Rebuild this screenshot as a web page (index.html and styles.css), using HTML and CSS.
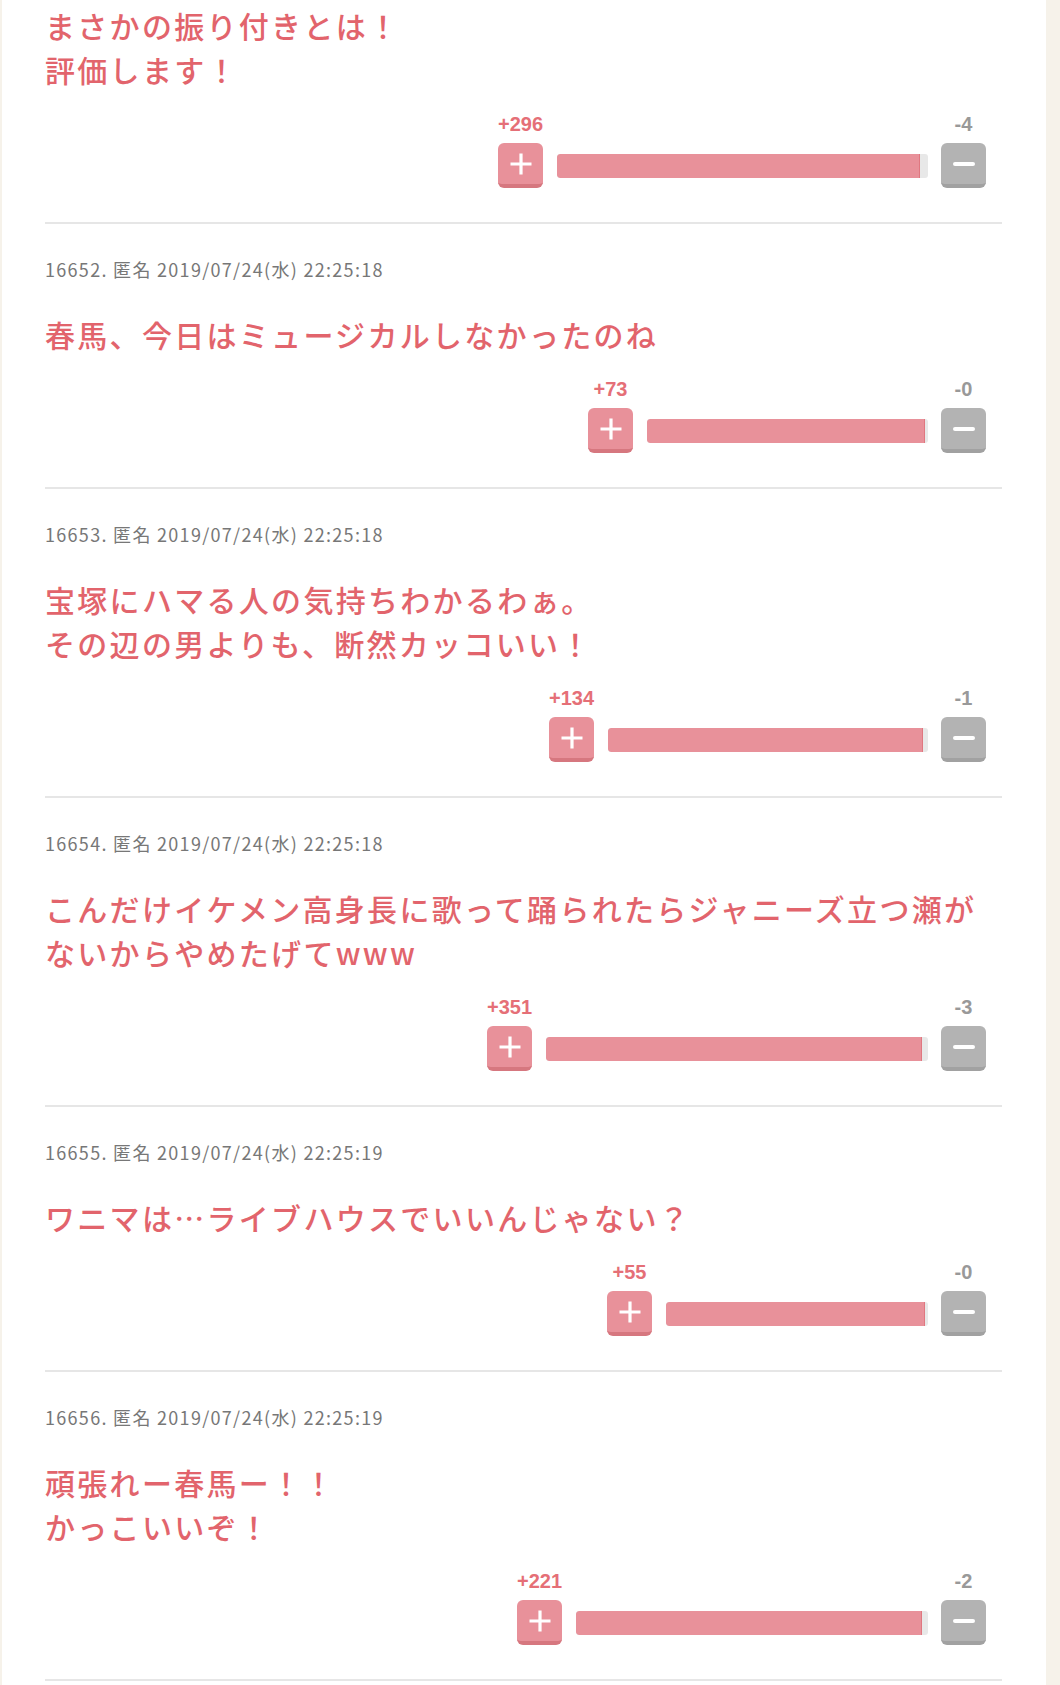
FILE: index.html
```html
<!DOCTYPE html>
<html lang="ja">
<head>
<meta charset="utf-8">
<title>コメント</title>
<link rel="stylesheet" href="styles.css">
</head>
<body>
<main class="thread">

  <article class="comment comment--cut">
    <p class="comment-body">まさかの振り付きとは！<br>評価します！</p>
    <div class="vote">
      <div class="vote-box">
        <span class="vote-count vote-count--plus">+296</span>
        <span class="vote-count vote-count--minus">-4</span>
        <button class="vote-btn vote-btn--plus" type="button" aria-label="プラス"><svg width="22" height="22" viewBox="0 0 22 22"><path d="M11 0.5v21M0.5 11h21" stroke="#fff" stroke-width="3.2" fill="none"/></svg></button>
        <div class="vote-bar" style="width:371px"><div class="vote-fill" style="width:98.7%"></div></div>
        <button class="vote-btn vote-btn--minus" type="button" aria-label="マイナス"><svg width="22" height="6" viewBox="0 0 22 6"><path d="M2 3h18" stroke="#fff" stroke-width="4" stroke-linecap="round" fill="none"/></svg></button>
      </div>
    </div>
  </article>

  <article class="comment">
    <p class="comment-meta">16652. 匿名 2019/07/24(水) 22:25:18</p>
    <p class="comment-body">春馬、今日はミュージカルしなかったのね</p>
    <div class="vote">
      <div class="vote-box">
        <span class="vote-count vote-count--plus">+73</span>
        <span class="vote-count vote-count--minus">-0</span>
        <button class="vote-btn vote-btn--plus" type="button" aria-label="プラス"><svg width="22" height="22" viewBox="0 0 22 22"><path d="M11 0.5v21M0.5 11h21" stroke="#fff" stroke-width="3.2" fill="none"/></svg></button>
        <div class="vote-bar" style="width:281px"><div class="vote-fill" style="width:100%"></div></div>
        <button class="vote-btn vote-btn--minus" type="button" aria-label="マイナス"><svg width="22" height="6" viewBox="0 0 22 6"><path d="M2 3h18" stroke="#fff" stroke-width="4" stroke-linecap="round" fill="none"/></svg></button>
      </div>
    </div>
  </article>

  <article class="comment">
    <p class="comment-meta">16653. 匿名 2019/07/24(水) 22:25:18</p>
    <p class="comment-body">宝塚にハマる人の気持ちわかるわぁ。<br>その辺の男よりも、断然カッコいい！</p>
    <div class="vote">
      <div class="vote-box">
        <span class="vote-count vote-count--plus">+134</span>
        <span class="vote-count vote-count--minus">-1</span>
        <button class="vote-btn vote-btn--plus" type="button" aria-label="プラス"><svg width="22" height="22" viewBox="0 0 22 22"><path d="M11 0.5v21M0.5 11h21" stroke="#fff" stroke-width="3.2" fill="none"/></svg></button>
        <div class="vote-bar" style="width:320px"><div class="vote-fill" style="width:99.3%"></div></div>
        <button class="vote-btn vote-btn--minus" type="button" aria-label="マイナス"><svg width="22" height="6" viewBox="0 0 22 6"><path d="M2 3h18" stroke="#fff" stroke-width="4" stroke-linecap="round" fill="none"/></svg></button>
      </div>
    </div>
  </article>

  <article class="comment">
    <p class="comment-meta">16654. 匿名 2019/07/24(水) 22:25:18</p>
    <p class="comment-body">こんだけイケメン高身長に歌って踊られたらジャニーズ立つ瀬がないからやめたげてwww</p>
    <div class="vote">
      <div class="vote-box">
        <span class="vote-count vote-count--plus">+351</span>
        <span class="vote-count vote-count--minus">-3</span>
        <button class="vote-btn vote-btn--plus" type="button" aria-label="プラス"><svg width="22" height="22" viewBox="0 0 22 22"><path d="M11 0.5v21M0.5 11h21" stroke="#fff" stroke-width="3.2" fill="none"/></svg></button>
        <div class="vote-bar" style="width:382px"><div class="vote-fill" style="width:99.2%"></div></div>
        <button class="vote-btn vote-btn--minus" type="button" aria-label="マイナス"><svg width="22" height="6" viewBox="0 0 22 6"><path d="M2 3h18" stroke="#fff" stroke-width="4" stroke-linecap="round" fill="none"/></svg></button>
      </div>
    </div>
  </article>

  <article class="comment">
    <p class="comment-meta">16655. 匿名 2019/07/24(水) 22:25:19</p>
    <p class="comment-body">ワニマは…ライブハウスでいいんじゃない？</p>
    <div class="vote">
      <div class="vote-box">
        <span class="vote-count vote-count--plus">+55</span>
        <span class="vote-count vote-count--minus">-0</span>
        <button class="vote-btn vote-btn--plus" type="button" aria-label="プラス"><svg width="22" height="22" viewBox="0 0 22 22"><path d="M11 0.5v21M0.5 11h21" stroke="#fff" stroke-width="3.2" fill="none"/></svg></button>
        <div class="vote-bar" style="width:262px"><div class="vote-fill" style="width:100%"></div></div>
        <button class="vote-btn vote-btn--minus" type="button" aria-label="マイナス"><svg width="22" height="6" viewBox="0 0 22 6"><path d="M2 3h18" stroke="#fff" stroke-width="4" stroke-linecap="round" fill="none"/></svg></button>
      </div>
    </div>
  </article>

  <article class="comment">
    <p class="comment-meta">16656. 匿名 2019/07/24(水) 22:25:19</p>
    <p class="comment-body">頑張れー春馬ー！！<br>かっこいいぞ！</p>
    <div class="vote">
      <div class="vote-box">
        <span class="vote-count vote-count--plus">+221</span>
        <span class="vote-count vote-count--minus">-2</span>
        <button class="vote-btn vote-btn--plus" type="button" aria-label="プラス"><svg width="22" height="22" viewBox="0 0 22 22"><path d="M11 0.5v21M0.5 11h21" stroke="#fff" stroke-width="3.2" fill="none"/></svg></button>
        <div class="vote-bar" style="width:352px"><div class="vote-fill" style="width:99.1%"></div></div>
        <button class="vote-btn vote-btn--minus" type="button" aria-label="マイナス"><svg width="22" height="6" viewBox="0 0 22 6"><path d="M2 3h18" stroke="#fff" stroke-width="4" stroke-linecap="round" fill="none"/></svg></button>
      </div>
    </div>
  </article>

</main>
</body>
</html>
```

FILE: styles.css
```css
html, body {
  margin: 0;
  padding: 0;
}

body {
  background: #f6f2ea;
  font-family: "Noto Sans CJK JP", "Noto Sans", sans-serif;
  min-height: 1685px;
  overflow: hidden;
}

.thread {
  margin-left: 2px;
  width: 1044px;
  min-height: 1685px;
  background: #ffffff;
  padding: 0 44px 0 43px;
  box-sizing: border-box;
}

.comment {
  padding: 32px 0 34px;
  border-bottom: 2px solid #e6e6e6;
}

.comment--cut {
  padding-top: 3px;
}

.comment-meta {
  margin: 0;
  font-size: 18px;
  line-height: 26px;
  letter-spacing: 1.3px;
  color: #777777;
  white-space: nowrap;
}

.comment-body {
  margin: 30px 0 0;
  font-size: 30px;
  font-weight: 500;
  line-height: 44px;
  letter-spacing: 2.3px;
  color: #e2646c;
}

.comment--cut .comment-body {
  margin-top: 0;
}

.vote {
  display: flex;
  justify-content: flex-end;
  padding-right: 16px;
  margin-top: 23px;
}

.vote-box {
  display: grid;
  grid-template-columns: 45px auto 45px;
  grid-template-rows: 20px 45px;
  row-gap: 9px;
}

.vote-count {
  grid-row: 1;
  font-family: "Liberation Sans", Arial, sans-serif;
  font-weight: bold;
  font-size: 20px;
  line-height: 20px;
  text-align: center;
  white-space: nowrap;
  display: flex;
  justify-content: center;
}

.vote-count--plus {
  grid-column: 1;
  color: #e56f77;
}

.vote-count--minus {
  grid-column: 3;
  color: #999999;
}

.vote-btn {
  grid-row: 2;
  width: 45px;
  height: 45px;
  margin: 0;
  padding: 0;
  border: 0;
  border-radius: 6px;
  display: flex;
  align-items: center;
  justify-content: center;
  box-sizing: border-box;
  cursor: pointer;
}

.vote-btn svg {
  display: block;
}

.vote-btn--plus {
  grid-column: 1;
  background: #e8919a;
  border-bottom: 4px solid #d6777f;
}

.vote-btn--minus {
  grid-column: 3;
  background: #b3b3b3;
  border-bottom: 4px solid #a1a1a1;
}

.vote-bar {
  grid-row: 2;
  grid-column: 2;
  align-self: center;
  height: 24px;
  margin: 0 13px 0 14px;
  padding-right: 3px;
  box-sizing: border-box;
  background: #e8e8e8;
  border-radius: 3px;
  overflow: hidden;
}

.vote-fill {
  height: 100%;
  background: #e8919a;
  border-right: 1px solid #e07780;
  box-sizing: border-box;
  border-radius: 3px 0 0 3px;
}
```
